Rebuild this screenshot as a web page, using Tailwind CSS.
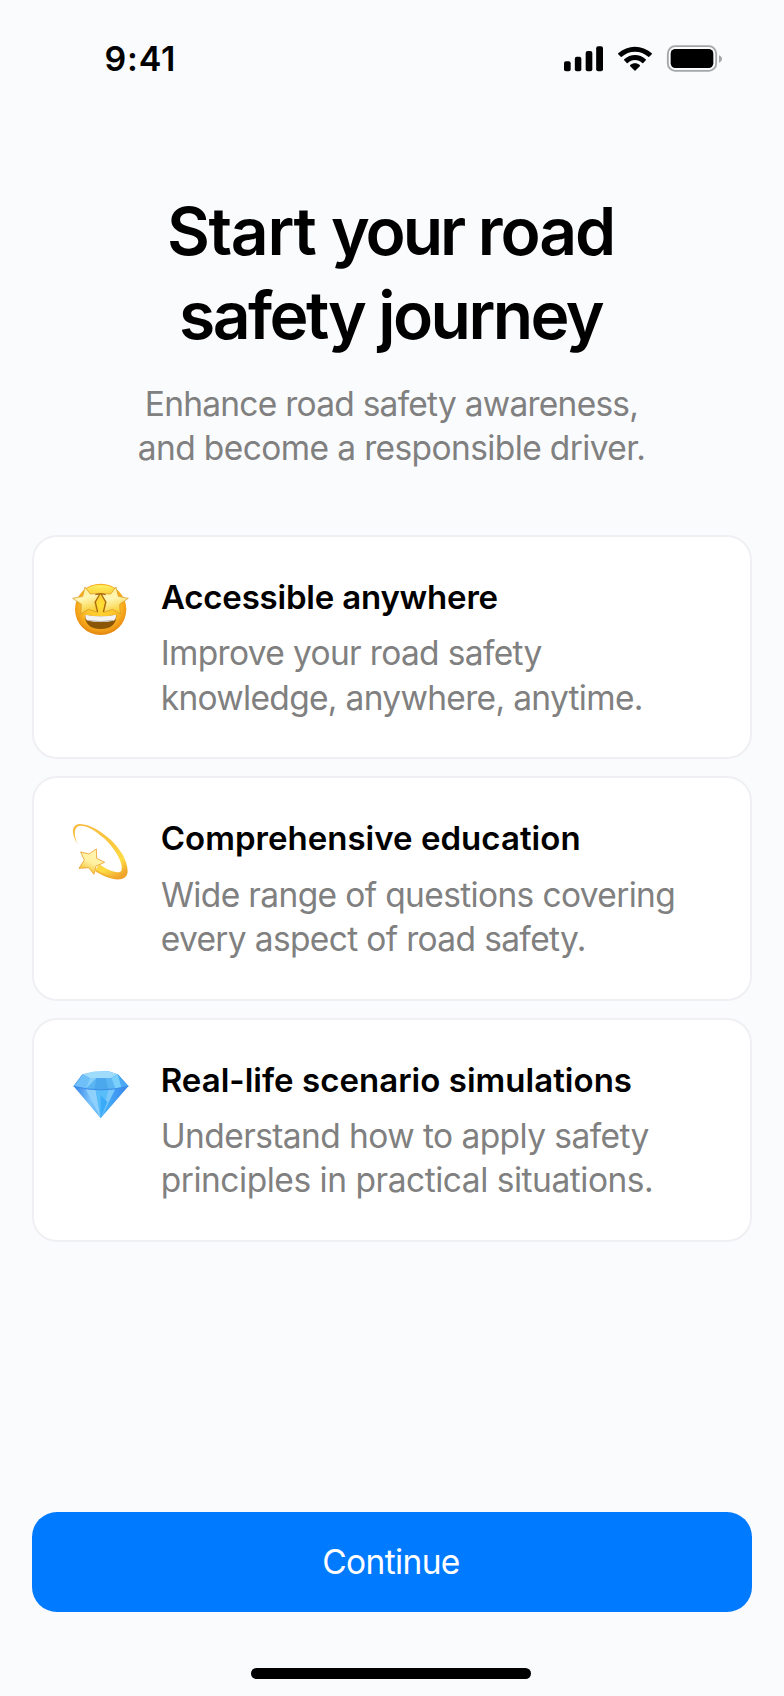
<!DOCTYPE html>
<html lang="en">
<head>
<meta charset="utf-8">
<title>Start your road safety journey</title>
<script src="https://cdn.jsdelivr.net/npm/@tailwindcss/browser@4"></script>
</head>
<body class="bg-[#fafbfd]">
<div class="flex h-[1696px] w-[784px] flex-col overflow-hidden bg-[#fafbfd] font-['Inter',sans-serif] text-black">

  <header class="flex h-[188.8px] shrink-0 items-start justify-between pt-[35px] pr-[54px] pl-[104.5px]">
    <span class="pt-[4px] text-[34px] leading-[40px] font-semibold tracking-[0.8px]">9:41</span>
    <svg class="h-[50px] w-[180px]" viewBox="0 0 540 150">
      <rect x="42" y="79" width="20" height="30" rx="6"/>
      <rect x="74.500" y="65" width="19.500" height="44" rx="6"/>
      <rect x="107" y="48" width="20" height="61" rx="6"/>
      <rect x="138.500" y="33.500" width="20.500" height="75.500" rx="6"/>
      <g transform="translate(204 35.500) scale(5.95)">
        <path d="M8.571 2.466c2.487 0 4.879.922 6.682 2.576.136.128.353.126.486-.004l1.298-1.263a.34.34 0 0 0-.003-.494c-4.731-4.375-12.195-4.375-16.926 0a.34.34 0 0 0-.003.494l1.298 1.263c.133.13.35.132.486.004 1.803-1.654 4.195-2.576 6.682-2.576z"/>
        <path d="M8.568 6.687c1.357 0 2.666.512 3.672 1.436.136.13.35.128.483-.007l1.287-1.319c.068-.069.105-.162.105-.26-.001-.098-.041-.19-.11-.258-3.064-2.924-7.808-2.924-10.872 0-.07.068-.11.16-.11.258-.001.098.036.191.104.26l1.287 1.319c.133.135.347.138.483.007 1.006-.924 2.314-1.436 3.671-1.436z"/>
        <path d="M11.09 9.48c.002.1-.037.196-.108.265l-2.168 2.23a.34.34 0 0 1-.488 0l-2.168-2.23c-.07-.069-.11-.165-.107-.265.002-.1.045-.194.12-.26 1.384-1.19 3.414-1.19 4.798 0 .075.066.118.16.12.26z"/>
      </g>
      <rect x="353.500" y="33.500" width="145" height="74" rx="22" fill="none" stroke="#a5a6a8" stroke-width="5.500"/>
      <rect x="362" y="42" width="128" height="57" rx="14"/>
      <path d="M507 61c12 4 12 18 0 22z" fill="#a5a6a8"/>
    </svg>
  </header>

  <h1 class="flex shrink-0 flex-col items-center pr-[3px] text-[66px] leading-[84.3px] font-semibold whitespace-nowrap">
    <span class="tracking-[-2.1px]"><span class="tracking-[-1.3px]">Start </span><span class="tracking-[-3px]">your</span> road</span>
    <span class="tracking-[-2.6px]">safety journey</span>
  </h1>
  <p class="mt-[25px] flex shrink-0 flex-col items-center pr-px text-[33.5px] leading-[44px] whitespace-nowrap text-[#808080]">
    <span class="tracking-[-0.75px]">Enhance road safety awareness,</span>
    <span class="tracking-[-0.61px]">and become a responsible driver.</span>
  </p>

  <main class="mt-[64.4px] flex shrink-0 flex-col gap-[16.7px] px-[32.3px] whitespace-nowrap">
    <section class="flex h-[224.7px] gap-5 rounded-[25px] border-2 border-[#f0f0f4] bg-white pt-[38.2px] pl-[25.7px]">
      <svg class="-mt-[4.7px] size-20 shrink-0" viewBox="0 0 240 240">
        <defs>
          <radialGradient id="face" cx=".5" cy=".42" r=".6"><stop offset="0" stop-color="#ffdf38"/><stop offset=".6" stop-color="#fcbd25"/><stop offset=".85" stop-color="#f09a16"/><stop offset="1" stop-color="#dc7d0c"/></radialGradient>
          <linearGradient id="shine" x1="0" y1="0" x2="0" y2="1"><stop offset="0" stop-color="#fff36a"/><stop offset="1" stop-color="#ffe04a" stop-opacity="0"/></linearGradient>
          <linearGradient id="eye" x1="0" y1="0" x2=".3" y2="1"><stop offset="0" stop-color="#fff08a"/><stop offset=".5" stop-color="#fff6b5"/><stop offset="1" stop-color="#f8cf35"/></linearGradient>
        </defs>
        <circle cx="122" cy="118" r="77" fill="url(#face)"/>
        <ellipse cx="122" cy="68" rx="48" ry="23" fill="url(#shine)"/>
        <path d="M75 134Q122 143 169 134Q170 176 122 177Q74 176 75 134z" fill="#8a5606"/>
        <path d="M76 134Q122 143 168 134Q169 149 160 152Q122 159 84 152Q75 149 76 134z" fill="#f4f3f0"/>
        <path d="M84 151Q122 159 160 151" fill="none" stroke="#bdb8ae" stroke-width="3"/>
        <g fill="url(#eye)" stroke="#d9962a" stroke-width="2.2" stroke-linejoin="round">
          <path d="M75 51L91 72L121 70L104 96L112 127L85 118L62 132L64 103L38 85L68 79z"/>
          <path d="M168 51L152 72L122 70L139 96L131 127L158 118L181 132L179 103L205 85L175 79z"/>
        </g>
        <path d="M106 74L120 71L106 96L113 126M137 74L123 71L137 96L130 126" fill="none" stroke="#a8690f" stroke-width="3.500" stroke-linejoin="round"/>
      </svg>
      <div>
        <h2 class="pl-[1px] text-[33px] leading-[44px] font-semibold tracking-[-0.2px]">Accessible anywhere</h2>
        <p class="mt-[12.4px] flex flex-col text-[33.5px] leading-[44.3px] text-[#808080]">
          <span class="pl-[0.7px] tracking-[-0.65px]">Improve your road safety</span>
          <span class="pl-[0.7px] tracking-[-0.68px]">knowledge, anywhere, anytime.</span>
        </p>
      </div>
    </section>

    <section class="flex h-[224.7px] gap-5 rounded-[25px] border-2 border-[#f0f0f4] bg-white pt-[38.2px] pl-[25.7px]">
      <svg class="-mt-[6px] size-20 shrink-0" viewBox="0 0 240 240">
        <defs>
          <linearGradient id="trail" x1=".2" y1="0" x2=".8" y2="1"><stop offset="0" stop-color="#f9bd45"/><stop offset=".5" stop-color="#fbc83c"/><stop offset=".78" stop-color="#fddc45"/><stop offset="1" stop-color="#efa22a"/></linearGradient>
          <linearGradient id="star" x1=".7" y1=".1" x2=".3" y2="1"><stop offset="0" stop-color="#fff5b5"/><stop offset=".5" stop-color="#fff0a0"/><stop offset="1" stop-color="#f3b91b"/></linearGradient>
        </defs>
        <path d="M53 102C32 70 34 41 62 42C112 44 203 118 203 183C202 214 168 213 134 199L104 182L118 163C148 184 176 193 184 182C192 162 166 116 132 85C103 59 80 47 62 47C41 48 40 74 53 102z" fill="url(#trail)"/>
        <path d="M110 184Q150 207 178 203Q194 200 196 180" fill="none" stroke="#efa52b" stroke-width="5" stroke-linecap="round" opacity=".7"/>
        <path d="M62 126L87 132L109 117L110 145L134 157L108 168L102 193L86 173L57 175L73 150z" fill="url(#star)" stroke="#eca02c" stroke-width="2.500" stroke-linejoin="round"/>
      </svg>
      <div>
        <h2 class="pl-[0.7px] text-[33px] leading-[44px] font-semibold tracking-[0.03px]">Comprehensive education</h2>
        <p class="mt-[12.4px] flex flex-col text-[33.5px] leading-[44.3px] text-[#808080]">
          <span class="pl-[1px] tracking-[-0.64px]">Wide range of questions covering</span>
          <span class="pl-[0.7px] tracking-[-0.65px]">every aspect of road safety.</span>
        </p>
      </div>
    </section>

    <section class="flex h-[224.7px] gap-5 rounded-[25px] border-2 border-[#f0f0f4] bg-white pt-[38.2px] pl-[25.7px]">
      <svg class="-mt-[2.2px] size-20 shrink-0" viewBox="0 0 240 240">
        <defs>
          <linearGradient id="pavilion" x1="0" y1="0" x2="1" y2="0"><stop offset="0" stop-color="#2f7de6"/><stop offset=".3" stop-color="#7cc4fb"/><stop offset=".6" stop-color="#45adf8"/><stop offset="1" stop-color="#3a83ea"/></linearGradient>
        </defs>
        <path d="M68 55L100 47L145 46L173 55L205 91L122 187L41 91z" fill="url(#pavilion)"/>
        <path d="M68 55L100 47L145 46L173 55L154 66L90 66z" fill="#9fdcfb"/>
        <path d="M68 55L90 66L77 98L41 91z" fill="#6fbff8"/>
        <path d="M90 66L154 66L166 98Q122 104 77 98z" fill="#5bb5f3"/>
        <path d="M109 66L137 66L145 100L103 100z" fill="#4ba8ec"/>
        <path d="M90 66L109 66L77 98z" fill="#86cffb"/>
        <path d="M154 66L173 55L205 91L166 98z" fill="#4baaf5"/>
        <path d="M173 55L184 94L166 98L154 66z" fill="#7bd0fb"/>
        <path d="M77 99L107 103L122 187z" fill="#8fd0fc"/>
        <path d="M107 103L145 102L122 187z" fill="#58bdf9"/>
        <path d="M145 102L166 99L122 187z" fill="#7cc9fb"/>
        <path d="M122 118L142 138L122 187z" fill="#3aabf8"/>
        <path d="M41 91Q122 112 205 91" fill="none" stroke="#3b8cea" stroke-width="3"/>
        <path d="M41 91L68 55M205 91L173 55" fill="none" stroke="#4a9bed" stroke-width="2"/>
      </svg>
      <div>
        <h2 class="pl-[0.7px] text-[33px] leading-[44px] font-semibold tracking-[0.03px]">Real-life scenario simulations</h2>
        <p class="mt-[12.4px] flex flex-col text-[33.5px] leading-[44.3px] text-[#808080]">
          <span class="pl-[0.7px] tracking-[-0.57px]">Understand how to apply safety</span>
          <span class="pl-[0.7px] tracking-[-0.47px]">principles in practical situations.</span>
        </p>
      </div>
    </section>
  </main>

  <footer class="mt-auto flex shrink-0 flex-col items-center px-8 pb-[17.3px]">
    <button class="h-[100.7px] w-full rounded-[25px] bg-[#007aff] pr-[2px] text-[33.5px] leading-[44px] tracking-[-0.62px] text-white">Continue</button>
    <div class="mt-[55.7px] mr-[2px] h-[10.7px] w-[280px] rounded-full bg-black"></div>
  </footer>
</div>
</body>
</html>
